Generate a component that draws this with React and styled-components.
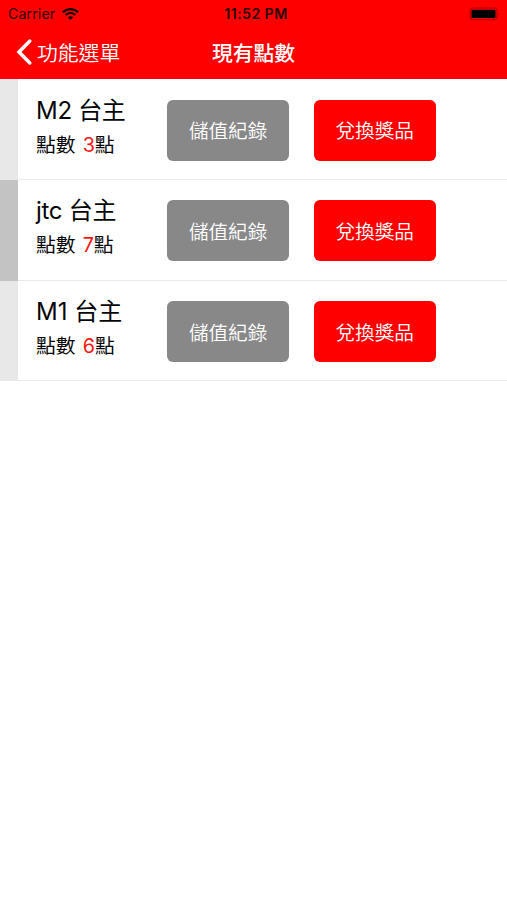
import React from "react";
import styled, { createGlobalStyle } from "styled-components";

const GlobalStyle = createGlobalStyle`
  *, *::before, *::after { box-sizing: border-box; }
  body {
    margin: 0;
    background: #fff;
    font-family: Inter, "Noto Sans CJK TC", sans-serif;
  }
`;

const Screen = styled.main`
  width: 507px;
  height: 900px;
  overflow: hidden;
  background: #fff;
  color: #050505;
`;

const Header = styled.header`
  height: 79.3px;
  background: #ff0000;
`;

const StatusBar = styled.div`
  display: grid;
  grid-template-columns: 1fr auto 1fr;
  align-items: center;
  height: 27px;
  padding: 0 6px 0 8px;
  color: #2b0000;
  line-height: 26px;
`;

const Carrier = styled.div`
  display: flex;
  align-items: center;
  gap: 7px;
  font-size: 14.2px;
  letter-spacing: 0.1px;
`;

const Clock = styled.div`
  padding-left: 3px;
  font-size: 14.2px;
  font-weight: 600;
  letter-spacing: 0.4px;
`;

const Battery = styled.svg`
  justify-self: end;
`;

const NavBar = styled.nav`
  display: grid;
  grid-template-columns: 1fr auto 1fr;
  align-items: center;
  height: 50px;
  padding-left: 16px;
  padding-right: 16px;
  color: #fff;
`;

const BackButton = styled.button`
  display: flex;
  align-items: center;
  gap: 4px;
  padding: 0;
  border: 0;
  background: none;
  color: inherit;
  font: 350 20.8px/30px "Noto Sans CJK TC", sans-serif;
`;

const Title = styled.h1`
  margin: 0;
  font: 500 20.8px/30px "Noto Sans CJK TC", sans-serif;
`;

const List = styled.ul`
  margin: 0;
  padding: 0;
  list-style: none;
`;

const Row = styled.li`
  display: flex;
  height: 100.7px;
`;

const Marker = styled.div`
  width: 18px;
  background: ${({ $dark }) => ($dark ? "#c3c3c3" : "#e8e8e8")};
`;

const RowBody = styled.div`
  display: flex;
  flex: 1;
  padding: 20.5px 0 0 18px;
  border-bottom: 1px solid #e9e9e9;
`;

const Info = styled.div`
  width: 131px;
  white-space: nowrap;
`;

const Name = styled.div`
  margin-top: -6px;
  font-size: 24px;
  line-height: 34px;
  letter-spacing: ${({ $spacing }) => $spacing || "0"};
`;

const Points = styled.div`
  margin-top: 3px;
  font-size: 19.8px;
  line-height: 28px;
`;

const Count = styled.span`
  margin-left: 1.5px;
  color: #ff1515;
`;

const Action = styled.button`
  width: 122.2px;
  height: 61px;
  margin-right: 24.4px;
  padding: 0;
  border: 0;
  border-radius: 6px;
  background: ${({ $primary }) => ($primary ? "#ff0000" : "#888888")};
  color: #fff;
  font: 350 19.6px/60px "Noto Sans CJK TC", sans-serif;
`;

const hosts = [
  { name: "M2 台主", points: 3, spacing: "-0.3px" },
  { name: "jtc 台主", points: 7, spacing: "-0.3px", dark: true },
  { name: "M1 台主", points: 6 },
];

const WifiIcon = () => (
  <svg width="17" height="12" viewBox="0 0 17 12" fill="none" stroke="#100000">
    <path d="M0.9 4.2C5.1 0.1 11.9 0.1 16.1 4.2" strokeWidth="2.3" />
    <path d="M3.6 7C6.3 4.3 10.7 4.3 13.4 7" strokeWidth="2.1" />
    <path d="M8.5 12L5.8 9.2C7.3 7.8 9.7 7.8 11.2 9.2Z" fill="#100000" stroke="none" />
  </svg>
);

const BatteryIcon = () => (
  <Battery width="32" height="14" viewBox="0 0 32 14">
    <rect x="1" y="1" width="27" height="11.6" rx="3" fill="none" stroke="#b80000" strokeWidth="1.2" />
    <rect x="2.5" y="2.7" width="24" height="8.4" rx="1" fill="#000" />
    <path d="M29.6 5Q31.2 6.8 29.6 8.7Z" fill="#a80000" />
  </Battery>
);

const BackIcon = () => (
  <svg width="17" height="28" viewBox="0 0 17 28" fill="none">
    <path
      d="M13.8 3L3 14L13.8 25"
      stroke="#fff"
      strokeWidth="3.5"
      strokeLinecap="round"
      strokeLinejoin="miter"
    />
  </svg>
);

export default function App() {
  return (
    <>
      <GlobalStyle />
      <Screen>
        <Header>
          <StatusBar>
            <Carrier>
              Carrier
              <WifiIcon />
            </Carrier>
            <Clock>11:52 PM</Clock>
            <BatteryIcon />
          </StatusBar>
          <NavBar>
            <BackButton>
              <BackIcon />
              功能選單
            </BackButton>
            <Title>現有點數</Title>
          </NavBar>
        </Header>
        <List>
          {hosts.map((host) => (
            <Row key={host.name}>
              <Marker $dark={host.dark} />
              <RowBody>
                <Info>
                  <Name $spacing={host.spacing}>{host.name}</Name>
                  <Points>
                    點數 <Count>{host.points}</Count>點
                  </Points>
                </Info>
                <Action>儲值紀錄</Action>
                <Action $primary>兌換獎品</Action>
              </RowBody>
            </Row>
          ))}
        </List>
      </Screen>
    </>
  );
}
